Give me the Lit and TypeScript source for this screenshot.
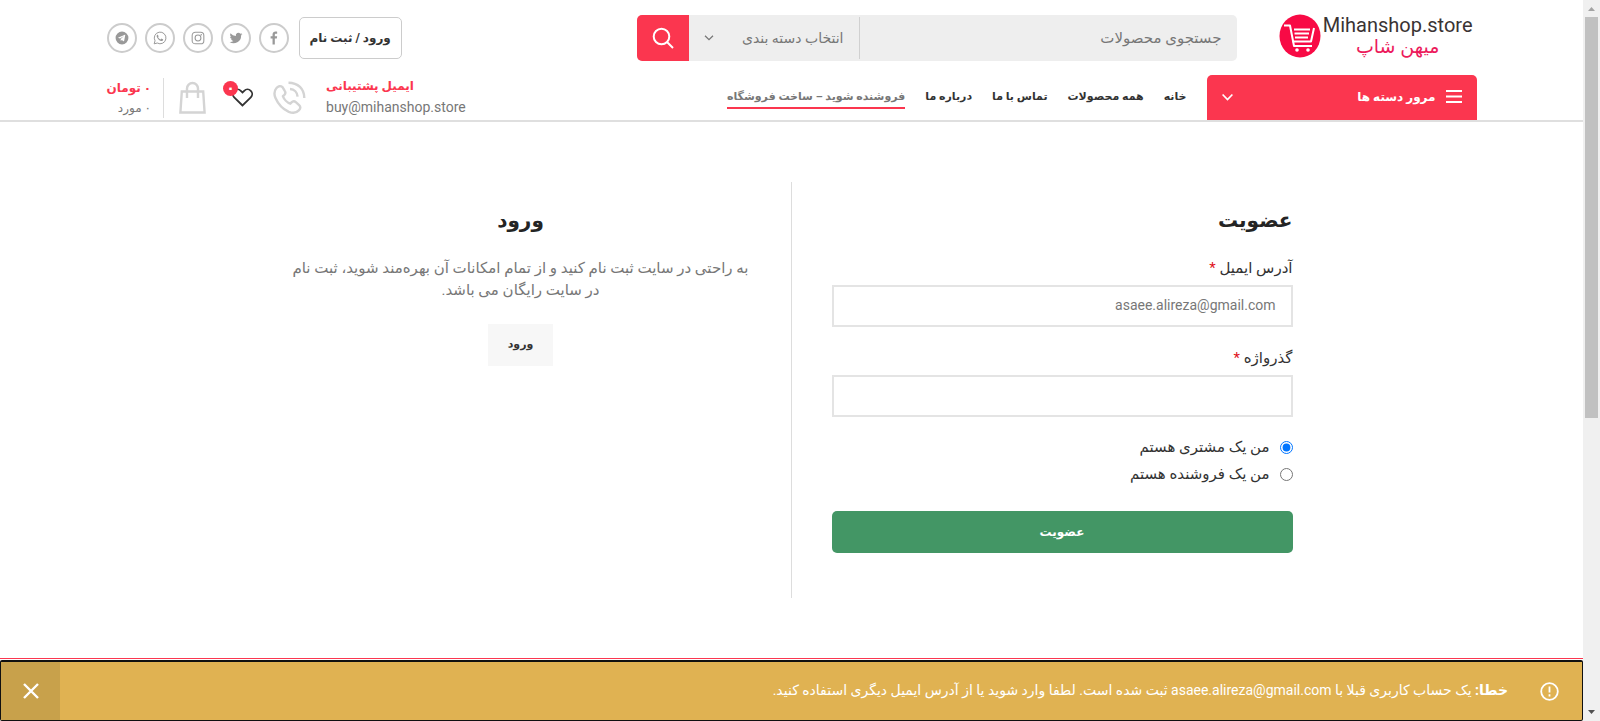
import { LitElement, html, css, svg } from "lit";
import { customElement, state } from "lit/decorators.js";

const socials = [
  { name: "Facebook", icon: svg`<path d="M13.400 23v-10h3.400l.6-4h-4V6.800c0-1.200.4-1.900 2-1.900h2V1.300C17 1.200 15.900 1 14.700 1 11.800 1 9.500 2.800 9.500 6.200V9H6.200v4h3.300v10z"/>` },
  { name: "Twitter", icon: svg`<path d="M23 5.200c-.8.4-1.700.6-2.600.7.9-.6 1.600-1.400 2-2.500-.9.500-1.900.9-2.900 1.100a4.500 4.500 0 0 0-7.700 4.100A12.800 12.800 0 0 1 2.500 3.900a4.500 4.500 0 0 0 1.400 6c-.7 0-1.400-.2-2-.6v.1c0 2.200 1.500 4 3.600 4.400-.7.2-1.400.2-2 .1.600 1.800 2.200 3.100 4.200 3.100A9.100 9.100 0 0 1 1 18.900a12.800 12.800 0 0 0 19.700-11.400c.9-.6 1.700-1.400 2.300-2.300z"/>` },
  { name: "Instagram", icon: svg`<g fill="none" stroke="currentColor" stroke-width="1.800"><rect x="2" y="2" width="20" height="20" rx="5.500"/><circle cx="12" cy="12" r="5"/></g><circle cx="17.600" cy="6.400" r="1.300"/>` },
  { name: "WhatsApp", icon: svg`<path d="M2 22l1.500-5.200A10 10 0 1 1 7.300 20.600z" fill="none" stroke="currentColor" stroke-width="1.700"/><path d="M8.600 6.700c-.3-.5-.9-.5-1.300-.1-1 .9-1.300 2.200-.7 3.600 1.300 3.300 4 5.900 7.300 6.900 1.500.4 3.300-.6 3.500-2.100.1-.5 0-.7-.4-.9l-2-1c-.4-.2-.7-.1-.9.200l-.8 1c-.2.200-.4.300-.7.100-1.700-.7-3-1.900-3.900-3.500-.1-.3 0-.4.100-.6l.7-.9c.1-.2.100-.4 0-.6z"/>` },
  { name: "Telegram", icon: svg`<path fill-rule="evenodd" d="M12 1a11 11 0 1 0 0 22 11 11 0 0 0 0-22zM17.600 7l-2 10c-.1.600-.5.700-1 .4l-2.900-2.100-1.400 1.400c-.3.300-.6.300-.6-.2l.1-3 5.500-5-6.600 4.300-2.900-.9c-.6-.2-.6-.6.1-.9L17 6.500c.5-.2.700 0 .6.500z"/>` },
];

const menu = [
  { label: "خانه" },
  { label: "همه محصولات" },
  { label: "تماس با ما" },
  { label: "درباره ما" },
  { label: "فروشنده شوید – ساخت فروشگاه", active: true },
];

@customElement("app-root")
export class AppRoot extends LitElement {
  @state() private noticeOpen = true;

  static styles = css`
    :host {
      display: flex;
      height: 100vh;
      overflow: hidden;
      background: #fff;
      color: #777;
      font: 14px/22px Roboto, "DejaVu Sans", sans-serif;
    }
    * { box-sizing: border-box; }
    a { color: inherit; text-decoration: none; }
    button, input, select { font: inherit; color: inherit; margin: 0; border: 0; border-radius: 0; }
    button { cursor: pointer; padding: 0; }
    svg { display: block; flex: none; }
    h2, p { margin: 0; }

    .page { flex: 1; min-width: 0; display: flex; flex-direction: column; }
    .wrap { width: 100%; max-width: 1400px; padding: 0 15px; margin: 0 auto; display: flex; align-items: center; }

    .top { height: 75px; }
    .brand-side { width: 240px; }
    .logo { display: flex; align-items: center; justify-content: flex-end; gap: 2px; direction: ltr; padding: 0 4px 4px 0; }
    .brand { display: flex; flex-direction: column; align-items: center; line-height: 22px; }
    .brand-en { font-size: 20px; color: #3a3333; }
    .brand-fa { font-size: 19px; color: #ec1a5c; }

    .search { width: 600px; height: 46px; display: flex; background: #eee; border-radius: 5px; overflow: hidden; }
    .query { flex: 1; min-width: 0; background: none; padding: 0 15px; font-size: 15px; outline: 0; }
    .query::placeholder { color: #777; opacity: 1; }
    .category { width: 171px; margin: 2px 0; border-right: 1px solid #d0d0d0; display: flex; align-items: center; padding-left: 15px; }
    .category select { appearance: none; flex: 1; min-width: 0; height: 100%; background: none; padding: 0 15px; outline: 0; }
    .go { width: 52px; background: #fb364f; color: #fff; display: grid; place-items: center; }

    .account { flex: 1; display: flex; align-items: center; justify-content: flex-end; gap: 10px; }
    .login { height: 42px; padding: 0 10px; border: 1px solid #ccc; border-radius: 5px; color: #333; font-weight: 700; font-size: 12px; display: flex; align-items: center; }
    .socials { display: flex; gap: 8px; }
    .social { width: 30px; height: 30px; border: 2px solid #ccc; border-radius: 50%; color: #999; display: grid; place-items: center; }

    .bar { border-bottom: 2px solid #dfdfdf; }
    .bar .wrap { height: 45px; }
    .browse { width: 270px; height: 45px; background: #fb364f; color: #fff; border-radius: 5px 5px 0 0; padding: 0 15px 2px; display: flex; align-items: center; gap: 10px; font-weight: 700; font-size: 12px; }
    .browse span { flex: 1; text-align: right; }
    .menu { flex: 1; display: flex; gap: 20px; padding-right: 20px; color: #333; font-weight: 700; font-size: 11px; white-space: nowrap; }
    .menu a { border-bottom: 2px solid transparent; line-height: 20px; }
    .menu .active { color: #777; border-color: #fb364f; }
    .tools { display: flex; align-items: center; }
    .support { width: 140px; direction: ltr; text-align: left; line-height: 21px; padding-bottom: 2px; }
    .strong { display: block; color: #fb364f; font-weight: 700; font-size: 12px; }
    .mail { display: block; }
    .phone { margin: 0 20px; color: #d4d4d4; }
    .wish { position: relative; color: #333; margin-left: 26px; }
    .badge { position: absolute; top: -7px; left: -9px; width: 15px; height: 15px; border-radius: 50%; background: #fb364f; color: #fff; font-weight: 700; line-height: 15px; text-align: center; }
    .cart { display: flex; align-items: center; }
    .bag { color: #d4d4d4; margin-left: 15px; }
    .total { min-width: 57px; height: 40px; border-right: 1px solid #ddd; padding-right: 12px; line-height: 20px; font-size: 12px; white-space: nowrap; }

    .main { flex: 1; min-height: 0; padding: 60px 15px; }
    .columns { max-width: 1082px; margin: 0 auto; display: grid; grid-template-columns: 1fr 1fr; }
    .col { padding: 24px 40px 45px; color: #333; }
    .col + .col { border-right: 1px solid #ddd; text-align: center; color: #777; }
    h2 { font-size: 20px; line-height: 28px; color: #242424; }
    .field { display: block; font-size: 15px; line-height: 22px; }
    .req { color: #e01020; }
    .box { display: block; width: 100%; height: 42px; background: #fff; border: 2px solid #e4e4e4; padding: 0 15px 2px; color: #777; margin: 6px 0 20px; outline: 0; }
    .form { padding-top: 23px; }
    .role { display: flex; align-items: center; gap: 10px; font-size: 15px; line-height: 27px; }
    .role input { width: 13px; height: 13px; accent-color: #0075ff; }
    .roles { margin-top: -3px; }
    .submit { width: 100%; height: 42px; margin-top: 23px; border-radius: 5px; background: #439665; color: #fff; font-weight: 700; font-size: 12px; }
    .intro { padding: 23px 0; font-size: 15px; }
    .enter { display: inline-block; height: 42px; padding: 0 20px; line-height: 42px; background: #f7f7f7; color: #333; font-weight: 700; font-size: 11px; }

    .foot { border-top: 1px solid #fb364f; padding-top: 1px; }
    .notice { height: 61px; border: 1px solid #101010; border-top-width: 2px; border-radius: 2px; background: #e0b252; color: #fff; display: flex; align-items: center; padding-right: 23px; }
    .notice p { flex: 1; padding: 0 32px 2px 0; }
    .close { width: 59px; height: 100%; background: #c8a14b; color: #fff; display: grid; place-items: center; }

    .rail { width: 17px; background: #f0f0f0; display: flex; flex-direction: column; align-items: center; }
    .rail svg { width: 17px; height: 17px; }
    .thumb { width: 13px; height: 58.4%; background: #c1c1c1; }
    .track { flex: 1; }
  `;

  render() {
    return html`
      <div class="page" dir="rtl">
        <header>
          <div class="wrap top">
            <div class="brand-side">
              <a class="logo" href="#">
                <svg width="42" height="44" viewBox="0 0 42 44"><ellipse cx="21" cy="22" rx="20.500" ry="21.500" fill="#f80a45"/><g fill="none" stroke="#fff" stroke-width="2" stroke-linejoin="round"><path d="M5 11.500h6L15 32h18"/><path d="M13.500 27.500H32L35 14"/><path d="M15 15.500h16M15.500 19.500h14.500M16 23.500h13"/></g><circle cx="18" cy="36" r="1.800" fill="#fff"/><circle cx="29" cy="36" r="1.800" fill="#fff"/></svg>
                <span class="brand"><span class="brand-en">Mihanshop.store</span><span class="brand-fa">میهن شاپ</span></span>
              </a>
            </div>
            <form class="search" role="search" @submit=${(e: Event) => e.preventDefault()}>
              <input class="query" type="text" aria-label="جستجوی محصولات" placeholder="جستجوی محصولات" />
              <div class="category">
                <select aria-label="انتخاب دسته بندی"><option>انتخاب دسته بندی</option></select>
                <svg width="10" height="6" viewBox="0 0 10 6" fill="none" stroke="#777" stroke-width="1.300"><path d="M1 .7l4 4 4-4"/></svg>
              </div>
              <button class="go" aria-label="جستجو">
                <svg width="22" height="22" viewBox="0 0 22 22" fill="none" stroke="#fff" stroke-width="2"><circle cx="9.500" cy="9.500" r="7.800"/><path d="M15 15l6 6"/></svg>
              </button>
            </form>
            <div class="account">
              <a class="login" href="#">ورود / ثبت نام</a>
              <nav class="socials">
                ${socials.map((s) => html`<a class="social" href="#" aria-label=${s.name}><svg width="14" height="14" viewBox="0 0 24 24" fill="currentColor">${s.icon}</svg></a>`)}
              </nav>
            </div>
          </div>
          <div class="bar">
            <div class="wrap">
              <button class="browse">
                <svg width="16" height="13" viewBox="0 0 16 13"><path d="M0 1h16M0 6.500h16M0 12h16" stroke="#fff" stroke-width="2"/></svg>
                <span>مرور دسته ها</span>
                <svg width="11" height="8" viewBox="0 0 11 8" fill="none" stroke="#fff" stroke-width="1.700"><path d="M.6 1.500l4.900 5 4.900-5"/></svg>
              </button>
              <nav class="menu">${menu.map((m) => html`<a href="#" class=${m.active ? "active" : ""}>${m.label}</a>`)}</nav>
              <div class="tools">
                <div class="support">
                  <span class="strong">ایمیل پشتیبانی</span>
                  <a class="mail" href="mailto:buy@mihanshop.store">buy@mihanshop.store</a>
                </div>
                <svg class="phone" width="33" height="33" viewBox="0 0 33 33" fill="none" stroke="currentColor" stroke-width="2.400" stroke-linejoin="round"><path d="M9.500 6.200C7.500 4.400 5 5 3.200 7.400 1.200 10 1 13.500 2.500 17c2.700 6.200 7.300 11.200 13.300 13.800 3.700 1.500 7.500 1.200 10-1.400 1.900-2 2-3.700.3-5.300l-3-2.700c-1.700-1.500-3.300-1.400-4.600 0l-1.200 1.300c-3-1-6.400-4.400-7.400-7.500l1.500-1.300c1.300-1.300 1.300-2.700.2-4.300z"/><path d="M17 8c4.300.2 7.300 3.200 7.600 7.700M15.500 1.700C25 1.700 31.300 8 31.300 17"/></svg>
                <a class="wish" href="#" aria-label="علاقه مندی">
                  <svg width="21" height="19" viewBox="0 0 21 19" fill="none" stroke="currentColor" stroke-width="1.800"><path d="M10.500 17.500L2.200 9.300a4.600 4.600 0 0 1 0-6.500 4.700 4.700 0 0 1 6.600 0l1.700 1.700 1.700-1.700a4.700 4.700 0 0 1 6.600 0 4.600 4.600 0 0 1 0 6.500z"/></svg>
                  <span class="badge">۰</span>
                </a>
                <a class="cart" href="#">
                  <svg class="bag" width="27" height="33" viewBox="0 0 27 33" fill="none" stroke="currentColor" stroke-width="2.400"><path d="M2.800 10.500h21.400l1.400 21H1.400z"/><path d="M8 17V7.500a5.500 5.500 0 0 1 11 0V17"/></svg>
                  <span class="total"><span class="strong">۰ تومان</span><span>۰ مورد</span></span>
                </a>
              </div>
            </div>
          </div>
        </header>

        <main class="main">
          <div class="columns">
            <section class="col">
              <h2>عضویت</h2>
              <form class="form" @submit=${(e: Event) => e.preventDefault()}>
                <label class="field" for="email">آدرس ایمیل <span class="req">*</span></label>
                <input class="box" id="email" type="email" .value=${"asaee.alireza@gmail.com"} />
                <label class="field" for="password">گذرواژه <span class="req">*</span></label>
                <input class="box" id="password" type="password" />
                <div class="roles">
                  <label class="role"><input type="radio" name="role" checked />من یک مشتری هستم</label>
                  <label class="role"><input type="radio" name="role" />من یک فروشنده هستم</label>
                </div>
                <button class="submit">عضویت</button>
              </form>
            </section>
            <section class="col">
              <h2>ورود</h2>
              <p class="intro">به راحتی در سایت ثبت نام کنید و از تمام امکانات آن بهره‌مند شوید، ثبت نام در سایت رایگان می باشد.</p>
              <a class="enter" href="#">ورود</a>
            </section>
          </div>
        </main>

        <div class="foot">
          ${this.noticeOpen
            ? html`<div class="notice" role="alert">
                <svg width="19" height="19" viewBox="0 0 19 19" fill="none" stroke="#fff" stroke-width="1.800"><circle cx="9.500" cy="9.500" r="8.300"/><path d="M9.500 4.500v6M9.500 12.300v2.200"/></svg>
                <p><strong>خطا:</strong> یک حساب کاربری قبلا با asaee.alireza@gmail.com ثبت شده است. لطفا وارد شوید یا از آدرس ایمیل دیگری استفاده کنید.</p>
                <button class="close" aria-label="بستن" @click=${() => (this.noticeOpen = false)}>
                  <svg width="16" height="16" viewBox="0 0 16 16" stroke="#fff" stroke-width="2.400"><path d="M1 1l14 14M15 1L1 15"/></svg>
                </button>
              </div>`
            : ""}
        </div>
      </div>
      <div class="rail" aria-hidden="true">
        <svg viewBox="0 0 17 17"><path d="M5 11l3.500-4 3.500 4z" fill="#a3a3a3"/></svg>
        <div class="track"><div class="thumb"></div></div>
        <svg viewBox="0 0 17 17"><path d="M5 6l3.500 4L12 6z" fill="#505050"/></svg>
      </div>
    `;
  }
}
